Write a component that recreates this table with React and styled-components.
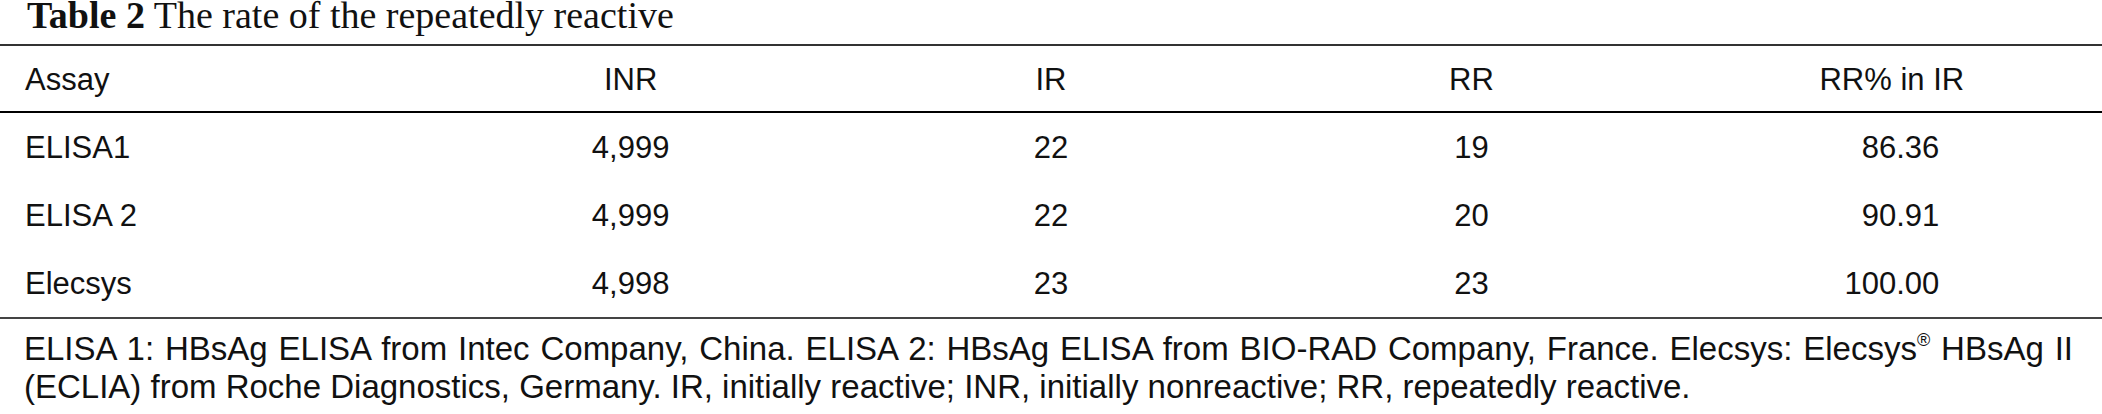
import styled, { createGlobalStyle } from 'styled-components'

const GlobalStyle = createGlobalStyle`
  html, body {
    margin: 0;
    padding: 0;
    background: #fff;
  }
`

const Figure = styled.div`
  width: 2102px;
  color: #111;
  font-family: "Liberation Sans", Arial, Helvetica, sans-serif;
`

const Caption = styled.div`
  height: 44px;
  padding-left: 27px;
  font-family: "Liberation Serif", "Times New Roman", serif;
  font-size: 38px;
  line-height: 30px;
  color: #111;
  b {
    font-weight: bold;
  }
`

const Table = styled.div`
  border-top: 2px solid #333;
  border-bottom: 2px solid #444;
`

const Row = styled.div`
  display: grid;
  grid-template-columns: repeat(5, 1fr);
  align-items: center;
  box-sizing: border-box;
  height: ${p => (p.$head ? '67px' : '68px')};
  padding-top: ${p => (p.$head ? '2px' : '2px')};
  border-bottom: ${p => (p.$head ? '2px solid #000' : 'none')};
  font-size: 31px;
  line-height: 34px;
`

const Cell = styled.div`
  text-align: ${p => (p.$left ? 'left' : 'center')};
  padding-left: ${p => (p.$left ? '25px' : '0')};
  white-space: nowrap;
`

const Num = styled.span`
  display: inline-block;
  width: 95px;
  text-align: right;
`

const Note = styled.div`
  margin-top: 11px;
  padding: 0 29px 0 24px;
  font-size: 33px;
  line-height: 38px;
  text-align: justify;
  sup {
    font-size: 18px;
    line-height: 0;
    vertical-align: 14px;
  }
`

const rows = [
  ['ELISA1', '4,999', '22', '19', '86.36'],
  ['ELISA 2', '4,999', '22', '20', '90.91'],
  ['Elecsys', '4,998', '23', '23', '100.00'],
]

export default function App() {
  return (
    <>
      <GlobalStyle />
      <Figure>
        <Caption>
          <b>Table 2</b> The rate of the repeatedly reactive
        </Caption>
        <Table>
          <Row $head>
            <Cell $left>Assay</Cell>
            <Cell>INR</Cell>
            <Cell>IR</Cell>
            <Cell>RR</Cell>
            <Cell>RR% in IR</Cell>
          </Row>
          {rows.map(r => (
            <Row key={r[0]}>
              <Cell $left>{r[0]}</Cell>
              <Cell>{r[1]}</Cell>
              <Cell>{r[2]}</Cell>
              <Cell>{r[3]}</Cell>
              <Cell><Num>{r[4]}</Num></Cell>
            </Row>
          ))}
        </Table>
        <Note>
          ELISA 1: HBsAg ELISA from Intec Company, China. ELISA 2: HBsAg ELISA from BIO-RAD Company, France. Elecsys: Elecsys<sup>®</sup> HBsAg II (ECLIA) from Roche Diagnostics, Germany. IR, initially reactive; INR, initially nonreactive; RR, repeatedly reactive.
        </Note>
      </Figure>
    </>
  )
}
